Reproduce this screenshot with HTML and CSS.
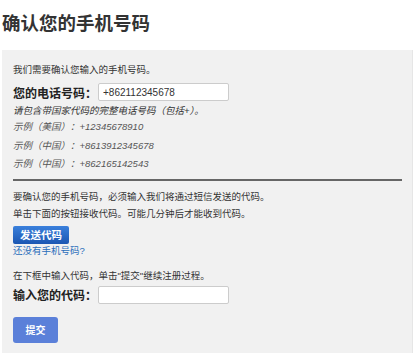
FILE: index.html
```html
<!DOCTYPE html>
<html lang="zh-CN">
<head>
  <meta charset="UTF-8">
  <title>确认您的手机号码</title>
  <link rel="stylesheet" href="styles.css">
</head>
<body>
  <h1>确认您的手机号码</h1>
  <div class="panel">
    <p class="note">我们需要确认您输入的手机号码。</p>
    <div class="field">
      <label>您的电话号码：</label>
      <input type="text" value="+862112345678">
    </div>
    <p class="hint">请包含带国家代码的完整电话号码（包括+）。</p>
    <p class="example">示例（美国）：+12345678910</p>
    <p class="example">示例（中国）：+8613912345678</p>
    <p class="example">示例（中国）：+862165142543</p>
    <hr>
    <p class="note">要确认您的手机号码，必须输入我们将通过短信发送的代码。</p>
    <p class="note">单击下面的按钮接收代码。可能几分钟后才能收到代码。</p>
    <button class="send">发送代码</button>
    <a class="nophone" href="#">还没有手机号码?</a>
    <p class="note code-note">在下框中输入代码，单击"提交"继续注册过程。</p>
    <div class="field">
      <label>输入您的代码：</label>
      <input type="text">
    </div>
    <button class="submit">提交</button>
  </div>
</body>
</html>
```

FILE: styles.css
```css
/* Page */
body {
  margin: 0;
  padding: 0 6px 0 2px;
  background: #fff;
  color: #333;
  font-family: "Liberation Sans", "Noto Sans CJK SC", sans-serif;
}
h1 {
  margin: 0;
  padding: 11px 0 0;
  height: 39px;
  font-size: 18.5px;
  line-height: 26px;
  font-weight: bold;
  color: #333;
}

/* Grey form panel */
.panel {
  background: #f1f1f1;
  border-right: 1px solid #e6e6e6;
  padding: 11px 10px 20px 11px;
  font-size: 9.5px;
}
.panel p { margin: 0; }
.note {
  line-height: 17px;
  color: #333;
}
.panel > .note:first-child { margin-bottom: 4px; }
.panel > .code-note { margin-bottom: 1px; }

.field {
  display: flex;
  align-items: center;
  height: 20px;
}
.field label {
  width: 85px;
  white-space: nowrap;
  font-size: 12px;
  font-weight: bold;
  color: #222;
}
.field input {
  width: 121px;
  height: 14px;
  padding: 1px 4px;
  border: 1px solid #ccc;
  border-radius: 2px;
  background: #fff;
  font: 10px "Liberation Sans", sans-serif;
  color: #333;
}

.hint {
  font-style: italic;
  line-height: 15px;
  margin-top: 1px !important;
}
.example {
  font-style: italic;
  color: #555;
  line-height: 18.5px;
}

hr {
  border: 0;
  border-top: 2px solid #666;
  margin: 5px 0 7px;
}

/* Buttons and link */
.send {
  display: block;
  margin-top: 4px;
  padding: 0 7px;
  height: 18px;
  border: 0;
  border-radius: 2px;
  background: linear-gradient(#3a80dc, #1b56b2);
  color: #fff;
  font: bold 10.5px "Liberation Sans", "Noto Sans CJK SC", sans-serif;
}
.nophone {
  display: block;
  color: #2a6ebb;
  text-decoration: none;
  line-height: 14px;
  margin-bottom: 9px;
}

.submit {
  display: block;
  margin-top: 12px;
  width: 45px;
  height: 26px;
  border: 0;
  border-radius: 3px;
  background: #5b80d9;
  color: #fff;
  font: bold 10px "Liberation Sans", "Noto Sans CJK SC", sans-serif;
}
```
